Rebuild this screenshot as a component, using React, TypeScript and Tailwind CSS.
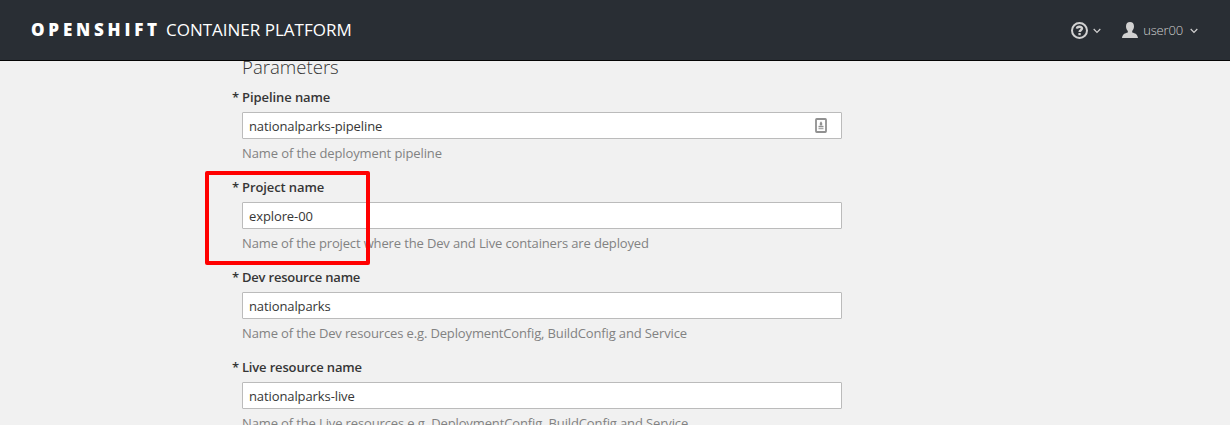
import React from "react";

const fields = [
  { label: "Pipeline name", value: "nationalparks-pipeline", help: "Name of the deployment pipeline", icon: true, tracking: "tracking-[-0.08px]", helpTracking: "tracking-[-0.1px]" },
  { label: "Project name", value: "explore-00", help: "Name of the project where the Dev and Live containers are deployed", tracking: "tracking-[-0.1px]", helpTracking: "tracking-[-0.14px]" },
  { label: "Dev resource name", value: "nationalparks", help: "Name of the Dev resources e.g. DeploymentConfig, BuildConfig and Service", tracking: "tracking-[-0.2px]", helpTracking: "tracking-[-0.14px]" },
  { label: "Live resource name", value: "nationalparks-live", help: "Name of the Live resources e.g. DeploymentConfig, BuildConfig and Service", tracking: "tracking-[-0.16px]", helpTracking: "tracking-[-0.13px]" },
];

function Chevron() {
  return (
    <svg width="8" height="6" viewBox="0 0 8 6" fill="none" stroke="#d1d1d1" strokeWidth="1.2">
      <path d="M.7 1 4 4.3 7.3 1" />
    </svg>
  );
}

export default function App() {
  return (
    <div className="relative flex h-[425px] w-[1230px] flex-col overflow-hidden bg-[#f1f1f1] font-['Open_Sans',sans-serif] text-[13px] leading-5 text-[#363636]">
      <header className="flex h-[61px] shrink-0 items-center justify-between border-b border-[#050505] bg-[#292e34] pl-[31px] pr-8">
        <div className="flex items-center gap-[5px] whitespace-nowrap text-[17px] leading-6 text-white">
          <span className="font-extrabold tracking-[3.8px]">OPENSHIFT</span>
          <span>CONTAINER PLATFORM</span>
        </div>
        <div className="flex items-center text-[#d1d1d1]">
          <svg width="17" height="17" viewBox="0 0 17 17" fill="none" stroke="#d1d1d1">
            <circle cx="8.5" cy="8.5" r="7.5" strokeWidth="2" />
            <path d="M5.900 6.700C6.100 4.100 11 4.100 11 6.600 11 8.200 8.600 8.200 8.600 10" strokeWidth="2.4" />
            <path d="M7.400 11h2.300v2.200H7.400z" fill="#d1d1d1" stroke="none" />
          </svg>
          <span className="ml-[5px] pt-[1px]"><Chevron /></span>
          <svg className="ml-[21px]" width="16" height="16" viewBox="0 0 16 16" fill="#d1d1d1">
            <path d="M8 0c2.500 0 4 1.500 4 4.200 0 2-.8 3.700-1.800 4.700v1.600c2.800.8 5.400 1.700 5.800 5.500H0c.4-3.800 3-4.700 5.800-5.500V8.900C4.800 7.900 4 6.200 4 4.200 4 1.500 5.500 0 8 0z" />
          </svg>
          <span className="ml-[5px] font-light tracking-[-0.15px]">user00</span>
          <span className="ml-[7px] pt-[1px]"><Chevron /></span>
        </div>
      </header>
      <main className="min-h-0 flex-1 overflow-hidden pl-[242px]">
        <h2 className="-mt-[7px] h-[33px] text-[18.600px] font-light leading-[25px]">Parameters</h2>
        {fields.map((f) => (
          <div key={f.label} className="flex h-[90px] w-[600px] flex-col">
            <div className={`-ml-[10px] flex h-[25px] gap-[3px] font-semibold ${f.tracking}`}>
              <span>*</span>
              <span>{f.label}</span>
            </div>
            <div className="flex h-[27px] shrink-0 items-center justify-between rounded-[1px] border border-[#bbb] bg-white pl-[6px] pr-[14px]">
              <span className="tracking-[-0.1px]">{f.value}</span>
              {f.icon && (
                <svg width="12" height="15" viewBox="0 0 12 15" fill="none" stroke="#919191">
                  <rect x="1" y="1" width="10" height="13" rx=".7" strokeWidth="1.800" />
                  <path d="M6 3.200 7.200 5v2.500H4.800V5z" fill="#919191" stroke="none" />
                  <path d="M3.500 8.500h5" strokeWidth="1.300" />
                  <path d="M3.500 10.500h5" strokeWidth="1.500" stroke="#aaa" />
                </svg>
              )}
            </div>
            <p className={`pt-1 text-[#828282] ${f.helpTracking}`}>{f.help}</p>
          </div>
        ))}
      </main>
      <div className="absolute left-[205px] top-[171px] h-[94px] w-[165px] rounded-[2px] border-4 border-[#ff0000]" />
    </div>
  );
}
